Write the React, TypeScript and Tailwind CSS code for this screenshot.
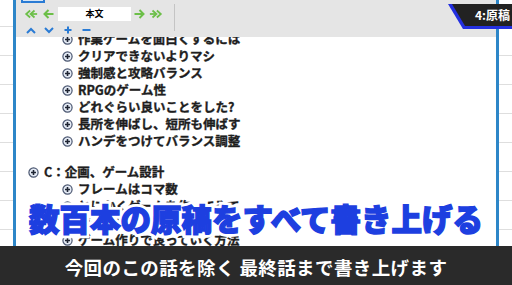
import React from "react";

const font = { fontFamily: '"Noto Sans CJK JP", "Noto Sans", sans-serif' };

function PlusCircle() {
  return (
    <svg width="11" height="11" viewBox="0 0 11 11" className="shrink-0">
      <circle cx="5.5" cy="5.5" r="4.6" fill="#e6ecf6" stroke="#4a5670" strokeWidth="1.2" />
      <path d="M5.5 3v5M3 5.5h5" stroke="#1f2533" strokeWidth="1.6" />
    </svg>
  );
}

function Item({ text, top = false }: { text: string; top?: boolean }) {
  return (
    <div className={`flex items-center gap-[5px] h-[17px] ${top ? "pl-[12px]" : "pl-[46px]"}`}>
      <PlusCircle />
      <span className="text-[12.5px] font-bold text-[#1e1e1e] leading-none whitespace-nowrap [-webkit-text-stroke:0.35px_#1e1e1e]">
        {text}
      </span>
    </div>
  );
}

function SideRows() {
  return (
    <div className="w-[13px] flex flex-col bg-white">
      <div className="h-[27px] border-b border-[#dedede] shrink-0" />
      {Array.from({ length: 8 }).map((_, i) => (
        <div key={i} className="h-[29px] border-b border-[#dedede] shrink-0" />
      ))}
    </div>
  );
}

function Arrow({ dir, double }: { dir: "l" | "r"; double?: boolean }) {
  const t = dir === "r" ? (double ? "scale(-1,1) translate(-16,0)" : "scale(-1,1) translate(-12,0)") : undefined;
  return (
    <svg width={double ? 14 : 12} height="12" viewBox={double ? "0 0 16 12" : "0 0 12 12"}>
      <g transform={t}>
        {double ? (
          <>
            <path d="M7 2L2.5 6L7 10" fill="none" stroke="#6cbf48" strokeWidth="2" />
            <path d="M12 2L7.5 6L12 10" fill="none" stroke="#6cbf48" strokeWidth="2" />
            <path d="M8 6H15" stroke="#6cbf48" strokeWidth="2" />
          </>
        ) : (
          <>
            <path d="M6.5 2L2.5 6L6.5 10" fill="none" stroke="#6cbf48" strokeWidth="2" />
            <path d="M3 6H11.5" stroke="#6cbf48" strokeWidth="2" />
          </>
        )}
      </g>
    </svg>
  );
}

function Toolbar() {
  return (
    <div className="relative h-[37px] bg-[#e5e5e5] flex shrink-0 z-10">
      <div className="absolute left-[5px] top-0 w-[24px] h-[3px] bg-[#d8e6f6] border-x-2 border-b-2 border-[#2a7bd4]" />
      <div className="flex flex-col pl-[8px] pt-[7px]">
        <div className="flex items-center h-[14px]">
          <Arrow dir="l" double />
          <span className="w-[4px]" />
          <Arrow dir="l" />
          <div className="ml-[4px] w-[73px] h-[14px] bg-white flex items-center justify-center text-[9px] font-bold text-black">
            本文
          </div>
          <span className="w-[3px]" />
          <Arrow dir="r" />
          <span className="w-[3px]" />
          <Arrow dir="r" double />
        </div>
        <div className="flex items-center h-[10px] mt-[4px] pl-[2px] gap-[8px]">
          <svg width="10" height="7" viewBox="0 0 10 7"><path d="M1 6L5 2L9 6" fill="none" stroke="#2a7bd4" strokeWidth="2" /></svg>
          <svg width="10" height="7" viewBox="0 0 10 7"><path d="M1 1L5 5L9 1" fill="none" stroke="#2a7bd4" strokeWidth="2" /></svg>
          <svg width="8" height="8" viewBox="0 0 8 8" className="ml-[2px]"><path d="M4 0.5V7.5M0.5 4H7.5" stroke="#2a7bd4" strokeWidth="2" /></svg>
          <svg width="9" height="8" viewBox="0 0 9 8" className="ml-[2px]"><path d="M0.5 4H8.5" stroke="#2a7bd4" strokeWidth="2" /></svg>
        </div>
      </div>
      <div className="ml-[11px] mt-[4px] w-px h-[27px] bg-[#c4c4c4]" />
    </div>
  );
}

export default function App() {
  const group1 = [
    "作業ゲームを面白くするには",
    "クリアできないよりマシ",
    "強制感と攻略バランス",
    "RPGのゲーム性",
    "どれぐらい良いことをした?",
    "長所を伸ばし、短所も伸ばす",
    "ハンデをつけてバランス調整",
  ];
  const group2 = ["フレームはコマ数", "とにかくゲームを作ってみて", "ゲームを作っていく中で", "ゲーム作りで良っていく方法"];
  const caption = "数百本の原稿をすべて書き上げる";

  return (
    <div className="relative w-[512px] h-[285px] overflow-hidden bg-white flex flex-col" style={font}>
      <div className="flex h-[246px] shrink-0">
        <SideRows />
        <div className="w-[3px] bg-[#2d86c8]" />
        <div className="flex-1 flex flex-col overflow-hidden bg-white">
          <Toolbar />
          <div className="flex-1 overflow-hidden">
            <div className="-mt-[6px] flex flex-col">
              {group1.map((t) => (
                <Item key={t} text={t} />
              ))}
              <div className="h-[14px]" />
              <Item text="C：企画、ゲーム設計" top />
              {group2.map((t) => (
                <Item key={t} text={t} />
              ))}
            </div>
          </div>
        </div>
        <div className="w-[3px] bg-[#2d86c8]" />
        <SideRows />
      </div>
      <div className="flex-1 bg-[#2a2a2a] flex items-center justify-center pt-[4px]">
        <span className="text-white text-[18.5px] font-bold tracking-[0.4px]">今回のこの話を除く 最終話まで書き上げます</span>
      </div>

      {/* chapter badge */}
      <div className="absolute z-20 left-[448px] top-[4px] w-[64px] h-[25px]">
        <svg width="64" height="25" viewBox="0 0 64 25" className="absolute inset-0">
          <polygon points="0,0 64,0 64,25 15,25" fill="#2430e0" />
          <polygon points="4,0 64,0 64,22 17,22" fill="#222222" />
        </svg>
        <span className="absolute left-[27px] top-[5px] text-white text-[12px] font-bold leading-none whitespace-nowrap">4:原稿</span>
      </div>

      {/* big caption */}
      <div className="absolute z-20 left-0 right-0 top-[203px] flex justify-center">
        <div className="relative">
          <span className="block text-[30.5px] font-black leading-none text-white whitespace-nowrap [-webkit-text-stroke:7px_white]">
            {caption}
          </span>
          <span className="absolute inset-0 block text-[30.5px] font-black leading-none text-[#1d3fe0] whitespace-nowrap [-webkit-text-stroke:1.4px_#1d3fe0]">
            {caption}
          </span>
        </div>
      </div>
    </div>
  );
}
